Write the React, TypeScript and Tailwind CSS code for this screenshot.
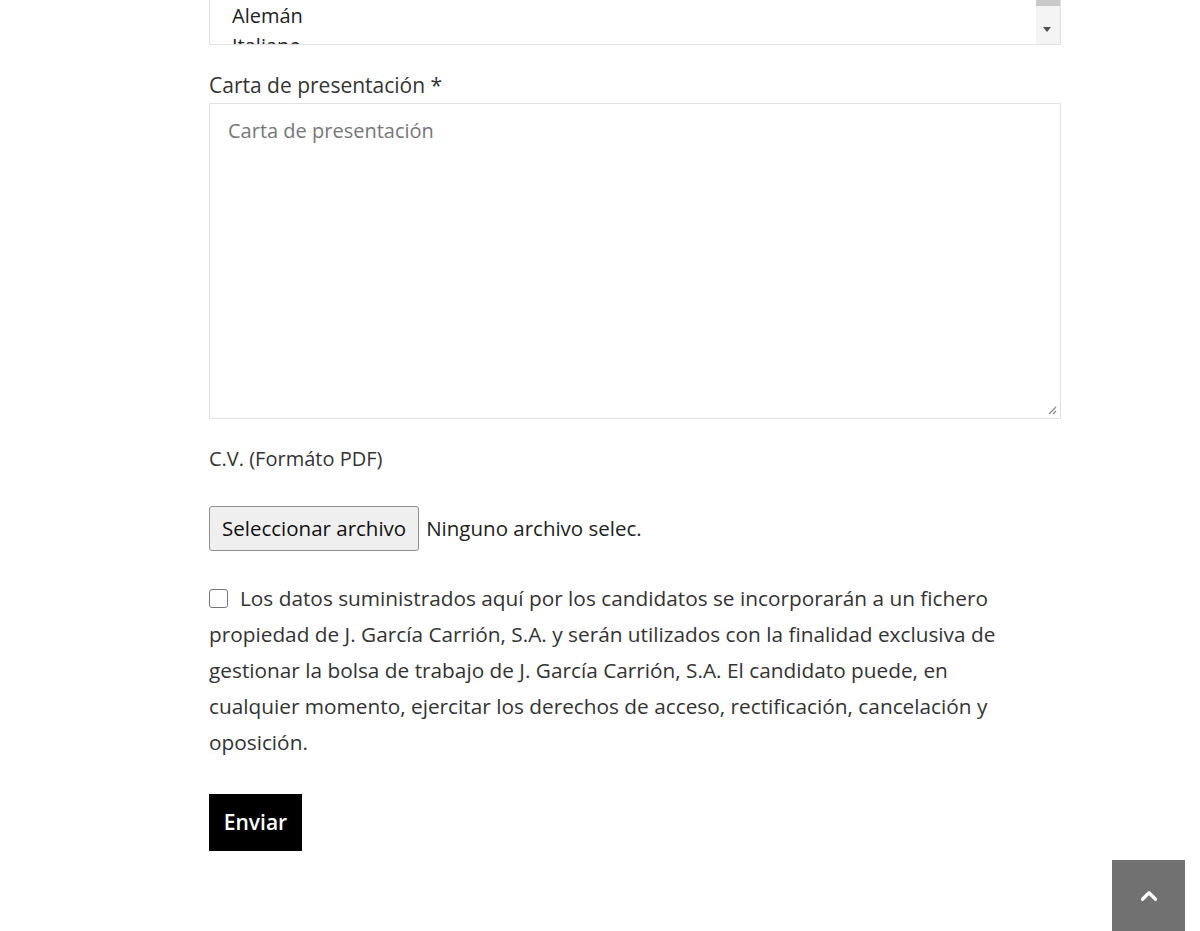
import { ChevronUp } from "lucide-react";

const font = { fontFamily: '"Open Sans", "Noto Sans", sans-serif' };

export default function App() {
  return (
    <div className="relative min-h-[931px] bg-white text-[#333]" style={font}>
      <div className="ml-[209px] w-[852px]">
        {/* idiomas (multi select, scrolled) */}
        <div className="relative flex h-[45px] overflow-hidden border-x border-b border-[#e2e2e2] bg-white">
          <div className="mt-[1px] flex-1 pl-[22px] text-[20px] leading-[30px] text-[#222]">
            <div>Alemán</div>
            <div>Italiano</div>
          </div>
          <div className="relative w-[24px] bg-[#f4f4f4]">
            <div className="h-[6px] w-full bg-[#c9c9c9]" />
            <div className="absolute left-[7px] top-[27px] h-0 w-0 border-x-[4px] border-t-[5px] border-x-transparent border-t-[#505050]" />
          </div>
        </div>

        <label className="mt-[26px] block text-[21px] leading-[28px]">Carta de presentación *</label>
        <div className="relative mt-[4px] h-[316px] border border-[#e2e2e2] px-[18px] py-[13px]">
          <span className="text-[20px] leading-[28px] text-[#777]">Carta de presentación</span>
          <svg className="absolute bottom-[3px] right-[3px]" width="10" height="10" viewBox="0 0 10 10">
            <path d="M9 2 L2 9 M9 6 L6 9" stroke="#888" strokeWidth="1.2" />
          </svg>
        </div>

        <div className="mt-[26px] text-[20px] leading-[28px]">C.V. (Formáto PDF)</div>

        <div className="mt-[33px] flex items-center gap-[7px]">
          <button className="h-[45px] rounded-[3px] border border-[#8f8f8f] bg-[#efefef] px-[12px] text-[20.5px] text-[#111]">
            Seleccionar archivo
          </button>
          <span className="text-[20.5px] text-[#222]">Ninguno archivo selec.</span>
        </div>

        <p className="mt-[29px] w-[820px] text-[20.8px] leading-[36px]">
          <span className="mr-[12px] inline-block h-[19px] w-[19px] rounded-[3px] border border-[#767676] align-[-2px]" />
          Los datos suministrados aquí por los candidatos se incorporarán a un fichero propiedad de J. García Carrión, S.A. y serán
          utilizados con la finalidad exclusiva de gestionar la bolsa de trabajo de J. García Carrión, S.A. El candidato puede, en
          cualquier momento, ejercitar los derechos de acceso, rectificación, cancelación y oposición.
        </p>

        <button className="mt-[34px] h-[57px] w-[93px] bg-black text-[21px] font-semibold text-white">Enviar</button>
      </div>

      <div className="absolute bottom-0 right-[15px] flex h-[71px] w-[73px] items-center justify-center bg-[#717171]">
        <ChevronUp className="h-[26px] w-[26px] text-white" strokeWidth={3} />
      </div>
    </div>
  );
}
